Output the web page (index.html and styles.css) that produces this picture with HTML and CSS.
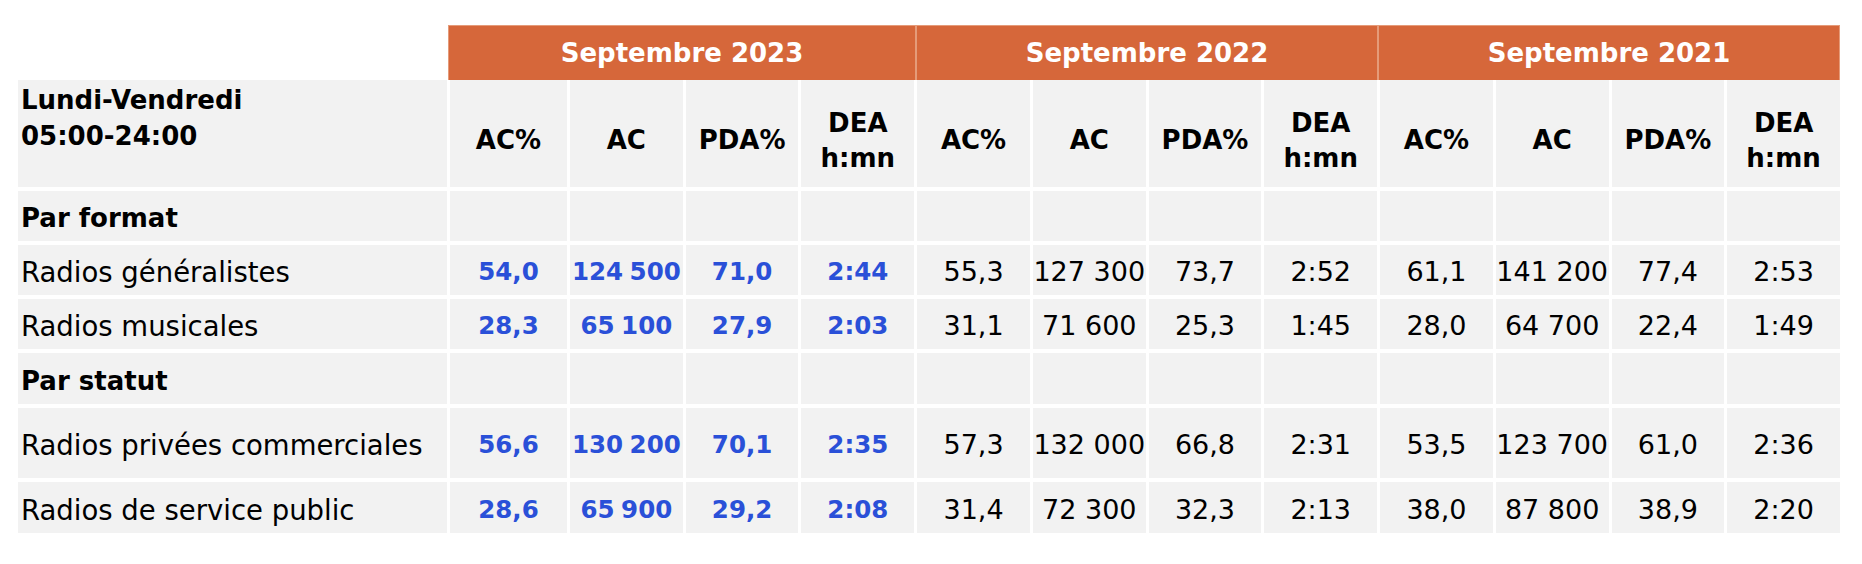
FILE: index.html
```html
<!DOCTYPE html>
<html lang="fr">
<head>
<meta charset="utf-8">
<title>Audience radio</title>
<link rel="stylesheet" href="styles.css">
</head>
<body>
<div class="sheet">
  <div class="band">
    <div class="group">Septembre 2023</div>
    <div class="group">Septembre 2022</div>
    <div class="group">Septembre 2021</div>
  </div>
  <div class="grid">
    <div class="cell label head-label">Lundi-Vendredi<br>05:00-24:00</div>
    <div class="cell head">AC%</div><div class="cell head">AC</div><div class="cell head">PDA%</div><div class="cell head">DEA<br>h:mn</div>
    <div class="cell head">AC%</div><div class="cell head">AC</div><div class="cell head">PDA%</div><div class="cell head">DEA<br>h:mn</div>
    <div class="cell head">AC%</div><div class="cell head">AC</div><div class="cell head">PDA%</div><div class="cell head">DEA<br>h:mn</div>

    <div class="cell label section">Par format</div>
    <div class="cell"></div><div class="cell"></div><div class="cell"></div><div class="cell"></div>
    <div class="cell"></div><div class="cell"></div><div class="cell"></div><div class="cell"></div>
    <div class="cell"></div><div class="cell"></div><div class="cell"></div><div class="cell"></div>

    <div class="cell label">Radios généralistes</div>
    <div class="cell num hi">54,0</div><div class="cell num hi">124 500</div><div class="cell num hi">71,0</div><div class="cell num hi">2:44</div>
    <div class="cell num">55,3</div><div class="cell num">127 300</div><div class="cell num">73,7</div><div class="cell num">2:52</div>
    <div class="cell num">61,1</div><div class="cell num">141 200</div><div class="cell num">77,4</div><div class="cell num">2:53</div>

    <div class="cell label">Radios musicales</div>
    <div class="cell num hi">28,3</div><div class="cell num hi">65 100</div><div class="cell num hi">27,9</div><div class="cell num hi">2:03</div>
    <div class="cell num">31,1</div><div class="cell num">71 600</div><div class="cell num">25,3</div><div class="cell num">1:45</div>
    <div class="cell num">28,0</div><div class="cell num">64 700</div><div class="cell num">22,4</div><div class="cell num">1:49</div>

    <div class="cell label section">Par statut</div>
    <div class="cell"></div><div class="cell"></div><div class="cell"></div><div class="cell"></div>
    <div class="cell"></div><div class="cell"></div><div class="cell"></div><div class="cell"></div>
    <div class="cell"></div><div class="cell"></div><div class="cell"></div><div class="cell"></div>

    <div class="cell label">Radios privées commerciales</div>
    <div class="cell num hi">56,6</div><div class="cell num hi">130 200</div><div class="cell num hi">70,1</div><div class="cell num hi">2:35</div>
    <div class="cell num">57,3</div><div class="cell num">132 000</div><div class="cell num">66,8</div><div class="cell num">2:31</div>
    <div class="cell num">53,5</div><div class="cell num">123 700</div><div class="cell num">61,0</div><div class="cell num">2:36</div>

    <div class="cell label">Radios de service public</div>
    <div class="cell num hi">28,6</div><div class="cell num hi">65 900</div><div class="cell num hi">29,2</div><div class="cell num hi">2:08</div>
    <div class="cell num">31,4</div><div class="cell num">72 300</div><div class="cell num">32,3</div><div class="cell num">2:13</div>
    <div class="cell num">38,0</div><div class="cell num">87 800</div><div class="cell num">38,9</div><div class="cell num">2:20</div>
  </div>
</div>
</body>
</html>
```

FILE: styles.css
```css
html, body {
  margin: 0;
  padding: 0;
  background: #ffffff;
}

body {
  font-family: "DejaVu Sans", "Liberation Sans", sans-serif;
  color: #000000;
}

.sheet {
  width: 1822px;
  padding: 25px 0 0 18px;
}

.band {
  margin-left: 430px;
  height: 55px;
  display: grid;
  grid-template-columns: 468px 1fr 1fr;
}

.group {
  background: #d6673a;
  color: #ffffff;
  font-weight: bold;
  font-size: 26px;
  display: flex;
  align-items: center;
  justify-content: center;
  box-shadow: inset 1px 1px 0 #e59b79, inset -1px 0 0 #e59b79;
}

.grid {
  display: grid;
  grid-template-columns: 429px 117px repeat(11, minmax(0, 1fr));
  grid-template-rows: 107px 50px 50px 50px 51px 70px 51px;
  column-gap: 3px;
  row-gap: 4px;
}

.cell {
  background: #f2f2f2;
  display: flex;
  align-items: center;
  justify-content: center;
  white-space: nowrap;
  padding-top: 4px;
  font-size: 27px;
  line-height: 34px;
}

.label {
  justify-content: flex-start;
  padding-left: 3px;
  font-size: 27.5px;
}

.section {
  font-weight: bold;
  font-size: 26px;
}

.head {
  font-weight: bold;
  font-size: 26px;
  line-height: 35px;
  text-align: center;
  padding-top: 14px;
}

.head-label {
  font-weight: bold;
  font-size: 26px;
  line-height: 36px;
  align-items: flex-start;
  padding-top: 2px;
}

.num.hi {
  color: #2a50d8;
  font-weight: bold;
  font-size: 24.5px;
  word-spacing: -2px;
}
```
